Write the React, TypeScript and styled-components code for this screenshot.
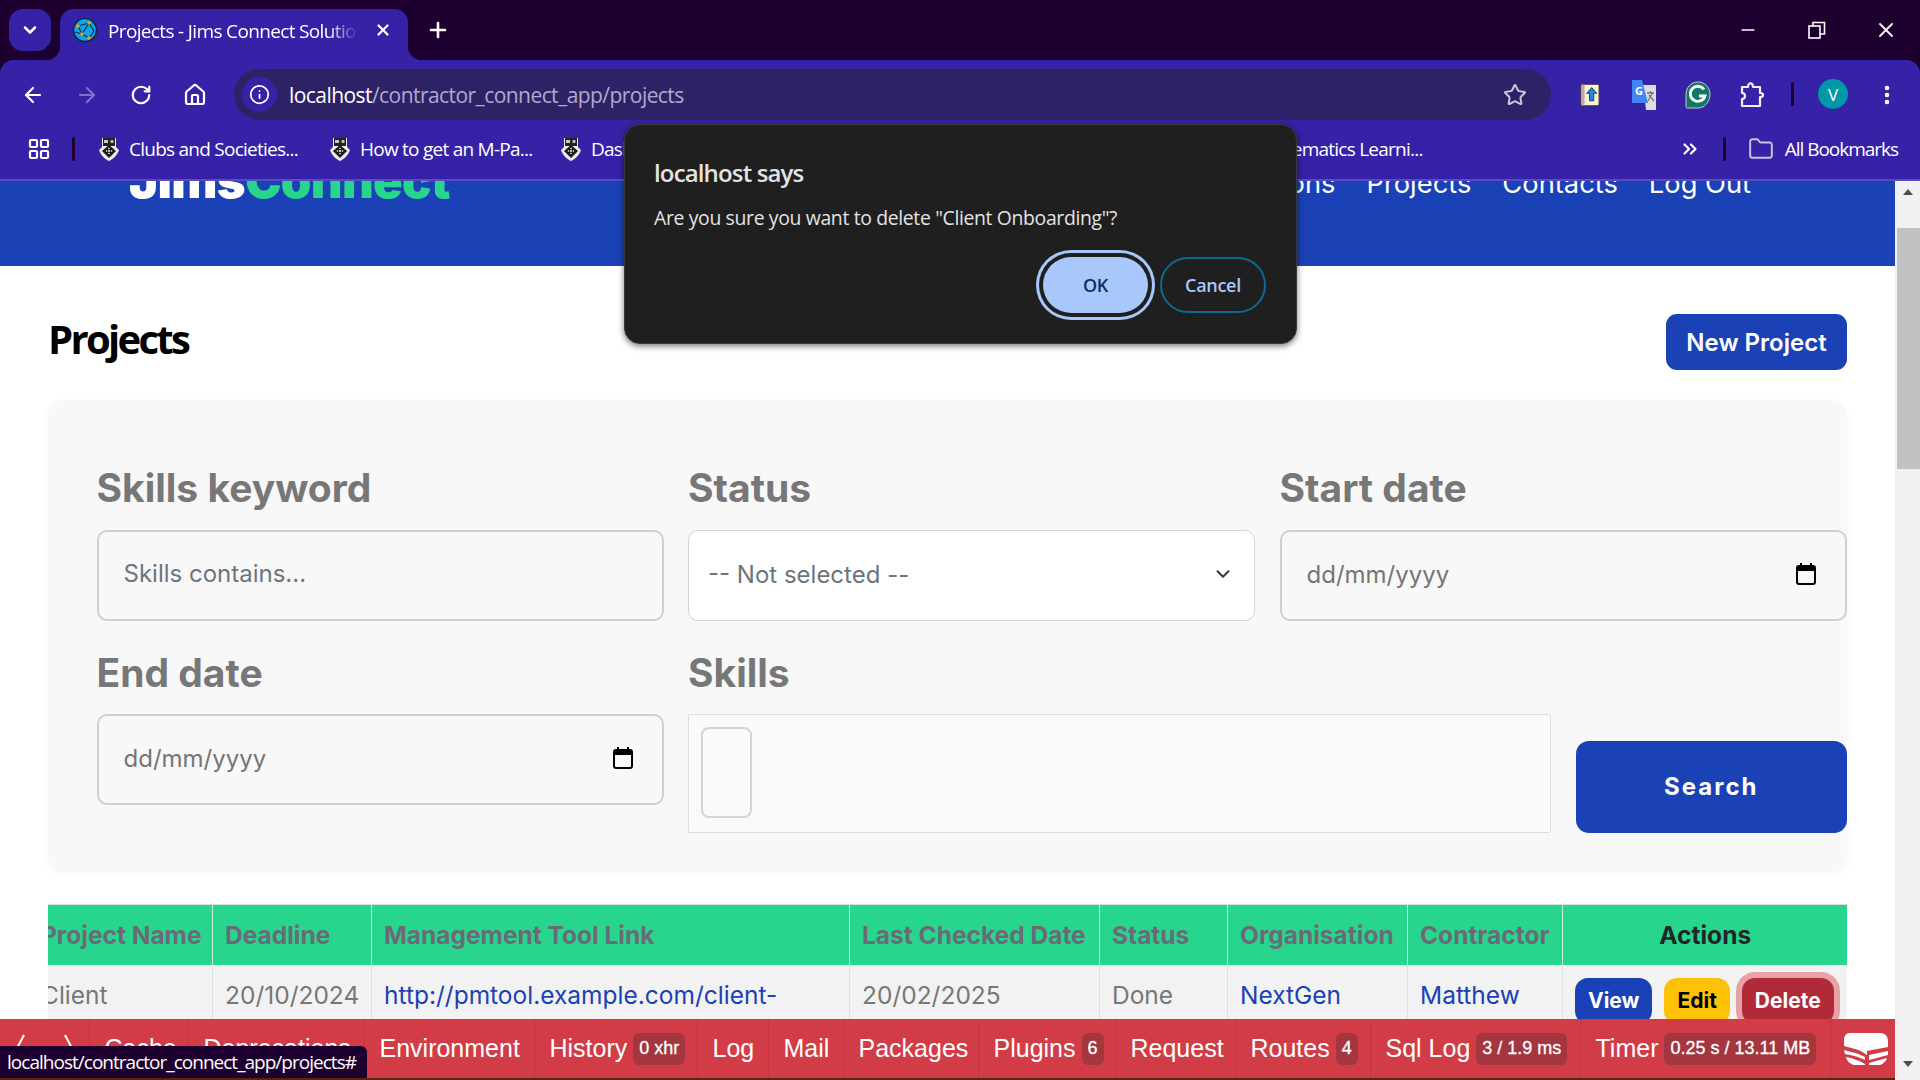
import styled, { createGlobalStyle } from "styled-components";
import { ArrowLeft, ArrowRight, ChevronDown, ChevronsRight, EllipsisVertical, Folder, Home, Info, LayoutGrid, Plus, RotateCw, Star, X, Minus } from "lucide-react";

const blue = "#1a41b5";
const chromeFont = `"Open Sans", "Noto Sans", sans-serif`;

const GlobalStyle = createGlobalStyle`
    html, body {
        margin: 0;
        height: 100%;
        overflow: hidden;
        background: #fff;
        font-family: Inter, "Liberation Sans", sans-serif;
    }
    * { box-sizing: border-box; }
`;

const Screen = styled.div`
    position: relative;
    width: 1920px;
    height: 1080px;
    overflow: hidden;
    display: flex;
    flex-direction: column;
    background: #1e0030;
`;

/* ---------- browser chrome ---------- */

const TabStrip = styled.div`
    height: 60px;
    flex: none;
    display: flex;
    align-items: flex-start;
    padding-top: 9px;
    padding-left: 9px;
    color: #fff;
`;

const TabSearch = styled.div`
    width: 42px;
    height: 42px;
    border-radius: 14px;
    background: #3622a6;
    display: flex;
    align-items: center;
    justify-content: center;
`;

const Tab = styled.div`
    position: relative;
    width: 348px;
    height: 51px;
    margin-left: 9px;
    padding: 0 16px 9px 12px;
    border-radius: 14px 14px 0 0;
    background: #3622a6;
    display: flex;
    align-items: center;

    &::before, &::after {
        content: '';
        position: absolute;
        bottom: 0;
        width: 14px;
        height: 14px;
    }
    &::before {
        left: -14px;
        background: radial-gradient(circle at 0 0, #1e0030 14px, #3622a6 14.5px);
    }
    &::after {
        right: -14px;
        background: radial-gradient(circle at 100% 0, #1e0030 14px, #3622a6 14.5px);
    }
`;

const TabTitle = styled.span`
    margin-left: 10px;
    margin-top: 2px;
    width: 250px;
    overflow: hidden;
    white-space: nowrap;
    font: 400 19px ${chromeFont};
    letter-spacing: -0.65px;
    -webkit-mask-image: linear-gradient(90deg, #000 88%, transparent 100%);
    mask-image: linear-gradient(90deg, #000 88%, transparent 100%);
`;

const TabClose = styled.span`
    margin-left: auto;
    display: flex;
`;

const NewTab = styled.span`
    margin-left: 18px;
    margin-top: 9px;
    display: flex;
`;

const WindowButtons = styled.div`
    margin-left: auto;
    display: flex;
    align-items: center;
    height: 42px;
`;

const WindowButton = styled.span`
    width: 69px;
    display: flex;
    justify-content: center;
`;

const ChromeBody = styled.div`
    flex: none;
    background: #3622a6;
    border-radius: 14px 14px 0 0;
    color: #fff;
`;

const Toolbar = styled.div`
    height: 69px;
    padding: 9px 0 0 6px;
    display: flex;
    align-items: flex-start;
`;

const ToolButton = styled.span<{ $dim?: boolean }>`
    width: 54px;
    height: 51px;
    flex: none;
    display: flex;
    align-items: center;
    justify-content: center;
    color: ${p => (p.$dim ? "#7e72cc" : "#fff")};
`;

const Omnibox = styled.div`
    width: 1317px;
    height: 51px;
    margin: 0 12px;
    padding-left: 8px;
    border-radius: 26px;
    background: #2e2266;
    display: flex;
    align-items: center;
`;

const SiteInfo = styled.span`
    width: 35px;
    height: 35px;
    border-radius: 50%;
    background: #3622a6;
    display: flex;
    align-items: center;
    justify-content: center;
`;

const Url = styled.span`
    margin-left: 12px;
    font: 400 21px ${chromeFont};
    letter-spacing: -0.56px;
    color: #b0a9cf;
    b { font-weight: 400; color: #fff; }
`;

const OmniStar = styled.span`
    margin-left: auto;
    margin-right: 24px;
    display: flex;
    color: #c9c5dc;
`;

const ToolDivider = styled.span`
    width: 3px;
    height: 24px;
    margin: 13px 0 0 12px;
    background: #1e0030;
    border-radius: 2px;
`;

const Avatar = styled.span`
    width: 30px;
    height: 30px;
    margin: 10px 12px 0 24px;
    border-radius: 50%;
    background: #0097a7;
    display: flex;
    align-items: center;
    justify-content: center;
    font: 400 17px ${chromeFont};
`;

const BookmarksBar = styled.div`
    height: 52px;
    padding: 0 22px 10px 27px;
    border-bottom: 2px solid #5a49c4;
    display: flex;
    align-items: center;
    font: 400 19px ${chromeFont};
    letter-spacing: -0.75px;
    white-space: nowrap;
`;

const BarDivider = styled.span<{ $left: number; $right: number }>`
    width: 3px;
    height: 24px;
    margin: 0 ${p => p.$right}px 0 ${p => p.$left}px;
    background: #1e0030;
    border-radius: 2px;
`;

const Bookmark = styled.span`
    width: 231px;
    display: flex;
    align-items: center;
    gap: 9px;
`;

const BookmarkTail = styled.span`
    margin-left: auto;
    margin-right: 256px;
`;

const BookmarkFolder = styled.span`
    display: flex;
    align-items: center;
    gap: 11px;
    letter-spacing: -1.03px;
    svg { color: #c9c5dc; }
`;

/* ---------- page ---------- */

const Viewport = styled.div`
    flex: 1;
    min-height: 0;
    display: flex;
    background: #fff;
`;

const PageColumn = styled.div`
    position: relative;
    flex: 1;
    min-width: 0;
    overflow: hidden;
`;

const Scrollbar = styled.div`
    width: 25px;
    flex: none;
    padding-top: 8px;
    background: #f1f1f1;
    display: flex;
    flex-direction: column;
    align-items: flex-end;
`;

const ScrollArrow = styled.span<{ $down?: boolean }>`
    width: 0;
    height: 0;
    margin-right: 7px;
    border-left: 5px solid transparent;
    border-right: 5px solid transparent;
    ${p => (p.$down ? "border-top: 6px solid #505050; margin-top: 592px;" : "border-bottom: 6px solid #505050;")}
`;

const ScrollThumb = styled.div`
    width: 23px;
    height: 241px;
    margin-top: 33px;
    background: #c1c1c1;
`;

const SiteHeader = styled.header`
    height: 85px;
    padding: 0 144px 0 129px;
    background: ${blue};
    overflow: hidden;
    display: flex;
    justify-content: space-between;
    align-items: flex-start;
`;

const Logo = styled.div`
    margin-top: -33px;
    font-size: 49px;
    line-height: 66px;
    font-weight: 900;
    letter-spacing: -0.7px;
    color: #fff;
    span { color: #28d58d; }
`;

const SiteNav = styled.nav`
    margin-top: -17px;
    display: flex;
    gap: 31px;
    font-size: 27.3px;
    line-height: 40px;
    color: #fff;
`;

const Main = styled.main`
    padding: 48px 48px 0 48px;
`;

const TitleRow = styled.div`
    display: flex;
    justify-content: space-between;
    align-items: flex-start;
`;

const PageTitle = styled.h1`
    margin: -3px 0 0 0;
    font: 700 40px/56px "Open Sans", sans-serif;
    letter-spacing: -2.7px;
    color: #000;
`;

const PrimaryButton = styled.button`
    height: 56px;
    width: 181px;
    border: 0;
    border-radius: 11px;
    background: ${blue};
    color: #fff;
    font: 600 24px Inter, sans-serif;
`;

const FilterPanel = styled.section`
    height: 468px;
    margin-top: 30px;
    padding: 66px 0 0 48.5px;
    border-radius: 16px;
    background: #f8f8f8;
    box-shadow: 0 4px 10px rgba(0, 0, 0, 0.05);
`;

const TopFilters = styled.div`
    display: grid;
    grid-template-columns: repeat(3, 567px);
    column-gap: 24.5px;
`;

const FilterLabel = styled.div`
    height: 44px;
    margin-bottom: 20px;
    font-size: 39px;
    line-height: 44px;
    font-weight: 700;
    color: #777;
    white-space: nowrap;
`;

const BottomFilters = styled.div`
    margin-top: 30px;
    display: grid;
    grid-template-columns: 567px 863px 271.5px;
    column-gap: 24.5px;

    ${FilterLabel} { margin-bottom: 19px; }
`;

const Filter = styled.div``;

const FieldBox = styled.div<{ $select?: boolean }>`
    height: 91px;
    display: flex;
    align-items: center;
    justify-content: space-between;
    border-radius: 10px;
    border: ${p => (p.$select ? "1px solid #ced4da" : "2px solid #cfcfcf")};
    background: ${p => (p.$select ? "#fff" : "transparent")};
    padding: 0 ${p => (p.$select ? "20px" : "29px")} 3px ${p => (p.$select ? "19px" : "25px")};
    font-size: 24px;
    color: ${p => (p.$select ? "#6c757d" : "#757575")};
`;

const SkillsInput = styled.input`
    width: 100%;
    height: 91px;
    padding: 0 25px 4px;
    border-radius: 10px;
    border: 2px solid #cfcfcf;
    background: transparent;
    font: 400 24px Inter, sans-serif;
    &::placeholder { color: #6c757d; opacity: 1; }
`;

const SkillsBox = styled.div`
    height: 119px;
    padding: 12px;
    border: 1px solid #ddd;
    border-radius: 2px;
    background: #fafafa;
`;

const SkillChip = styled.div`
    width: 51px;
    height: 91px;
    border: 2px solid #d4d4d4;
    border-radius: 8px;
`;

const SearchButton = styled.button`
    align-self: end;
    height: 92px;
    padding-bottom: 3px;
    border: 0;
    border-radius: 13px;
    background: ${blue};
    color: #fff;
    font: 700 24px Inter, sans-serif;
    letter-spacing: 2px;
`;

const TableClip = styled.div`
    margin-top: 36px;
    overflow: hidden;
`;

const DataTable = styled.table`
    width: 1819px;
    margin-left: -20px;
    table-layout: fixed;
    border-collapse: collapse;
    border-top: 1px solid #dedede;
    font-size: 24.5px;
`;

const HeadCell = styled.th<{ $dark?: boolean; $center?: boolean }>`
    height: 60px;
    padding: 0 12px;
    background: #28d58d;
    border-left: 1px solid #c9efe0;
    text-align: ${p => (p.$center ? "center" : "left")};
    font-weight: 700;
    white-space: nowrap;
    color: ${p => (p.$dark ? "#212529" : "#6a6a78")};
`;

const BodyCell = styled.td`
    padding: 10px 12px;
    background: #f2f2f2;
    border-left: 1px solid #dfdfdf;
    vertical-align: top;
    color: #777;
    line-height: 40px;

    a { color: ${blue}; text-decoration: none; }
`;

const RowActions = styled.div`
    display: flex;
    gap: 12px;
    margin-top: 3px;
`;

const ActionButton = styled.button<{ $bg: string; $fg: string; $ring?: boolean }>`
    height: 46px;
    padding: 0 13px;
    border: 0;
    border-radius: 13px;
    background: ${p => p.$bg};
    color: ${p => p.$fg};
    font: 700 21px Inter, sans-serif;
    box-shadow: ${p => (p.$ring ? "0 0 0 6px #e9a1a8" : "none")};
`;

/* ---------- debug bar ---------- */

const DebugBar = styled.div`
    position: absolute;
    left: 0;
    right: 0;
    bottom: 0;
    height: 61px;
    background: #d23c46;
    border-bottom: 2px solid #5a2410;
    display: flex;
    font: 400 25px "Liberation Sans", sans-serif;
    color: #fff;
    white-space: nowrap;
`;

const DebugItem = styled.div<{ $w: number }>`
    width: ${p => p.$w}px;
    flex: none;
    padding-left: 14.5px;
    border-right: 1px solid #c2343e;
    display: flex;
    align-items: center;
    gap: 6px;
`;

const DebugBadge = styled.span`
    height: 32px;
    padding: 0 6px;
    border-radius: 6px;
    background: #a3363f;
    display: flex;
    align-items: center;
    font-size: 18px;
    -webkit-text-stroke: 0.3px #fff;
`;

const DebugLogo = styled.div`
    flex: 1;
    padding-left: 6px;
    display: flex;
    align-items: center;
    justify-content: center;
`;

const StatusBubble = styled.div`
    position: absolute;
    left: 0;
    bottom: 2px;
    width: 367px;
    height: 32px;
    padding-left: 7px;
    border-radius: 0 6px 0 0;
    background: #1e0030;
    color: #fff;
    display: flex;
    align-items: center;
    font: 400 19px ${chromeFont};
    letter-spacing: -0.98px;
    white-space: nowrap;
`;

/* ---------- alert dialog ---------- */

const Dialog = styled.div`
    position: absolute;
    top: 124px;
    left: 624px;
    width: 673px;
    height: 220px;
    padding: 33px 30px 0 29px;
    border-radius: 16px;
    background: #1f1f1f;
    border: 1px solid #3a3a3a;
    box-shadow: 0 2px 6px rgba(0, 0, 0, 0.55);
    color: #e3e3e3;
    font-family: ${chromeFont};
`;

const DialogTitle = styled.div`
    font-size: 24px;
    line-height: 30px;
    font-weight: 600;
    letter-spacing: -0.85px;
`;

const DialogText = styled.div`
    margin-top: 15px;
    font-size: 19.4px;
    line-height: 30px;
    letter-spacing: -0.35px;
`;

const DialogActions = styled.div`
    margin-top: 24px;
    display: flex;
    justify-content: flex-end;
    gap: 12px;
`;

const DialogButton = styled.button<{ $primary?: boolean }>`
    width: ${p => (p.$primary ? 105 : 106)}px;
    height: 56px;
    border-radius: 28px;
    font: 600 18px ${chromeFont};
    letter-spacing: -0.3px;
    background: ${p => (p.$primary ? "#a8c7fa" : "transparent")};
    color: ${p => (p.$primary ? "#062e6f" : "#a8c7fa")};
    border: ${p => (p.$primary ? "0" : "2px solid #0b6a94")};
    box-shadow: ${p => (p.$primary ? "0 0 0 4px #1f1f1f, 0 0 0 7px #a8c7fa" : "none")};
`;

/* ---------- small drawings ---------- */

const Globe = () => (
    <svg width="26" height="26" viewBox="0 0 26 26">
        <circle cx="13" cy="13" r="11.5" fill="#0ea5e9" stroke="#0b2a45" strokeWidth="1.5" />
        <path d="M6 9 L17 6 M6 9 L10 17 M10 17 L17 21 M17 6 L10 17 M17 6 L22 14 M3 15 L10 17 M17 21 L22 14" stroke="#0b2a45" strokeWidth="1.2" fill="none" />
        <circle cx="6" cy="9" r="1.8" fill="#f59e0b" />
        <circle cx="17" cy="6" r="1.8" fill="#f59e0b" />
        <circle cx="10" cy="17" r="1.8" fill="#f59e0b" />
        <circle cx="17" cy="21" r="1.8" fill="#f59e0b" />
    </svg>
);

const Crest = () => (
    <svg width="22" height="24" viewBox="0 0 22 24">
        <path d="M4 1 H18 V10 L21 13 C19 19 15 22 11 24 C7 22 3 19 1 13 L4 10 Z" fill="#ededed" />
        <rect x="5" y="1" width="12" height="8" fill="#222" />
        <rect x="6" y="3" width="4" height="3" fill="#ccc" />
        <circle cx="14" cy="4.5" r="1.7" fill="#bbb" />
        <path d="M11 8 L18 14 L11 21 L4 14 Z" fill="#1a1a1a" />
        <circle cx="11" cy="14" r="1" fill="#fff" />
        <circle cx="8.5" cy="14" r="0.8" fill="#fff" />
        <circle cx="13.5" cy="14" r="0.8" fill="#fff" />
        <circle cx="11" cy="11.5" r="0.8" fill="#fff" />
        <circle cx="11" cy="16.5" r="0.8" fill="#fff" />
    </svg>
);

const BookExtension = () => (
    <svg width="20" height="24" viewBox="0 0 24 28">
        <rect x="1" y="1" width="22" height="26" rx="1.5" fill="#fbf3d5" stroke="#3a3142" strokeWidth="1.4" />
        <rect x="1.5" y="1.5" width="4" height="25" fill="#c9a3a8" />
        <path d="M14 5 L20 12 H16.5 V21 H11.5 V12 H8 Z" fill="#1e88e5" stroke="#10294d" strokeWidth="1" />
    </svg>
);

const TranslateExtension = () => (
    <svg width="26" height="30" viewBox="0 0 26 30">
        <path d="M12 5 H25 V30 H15 Z" fill="#dcdcdc" />
        <path d="M16 13 H23 M19.5 11 V13 M17 21 L21.5 13 M18 15 L23 21" stroke="#777" strokeWidth="1.3" fill="none" />
        <path d="M1 0 H11 L17 23 H1 Z" fill="#4285f4" />
        <text x="4" y="15" fontSize="11" fontWeight="700" fill="#fff" fontFamily="Open Sans, sans-serif">G</text>
    </svg>
);

const GrammarlyExtension = () => (
    <svg width="26" height="28" viewBox="0 0 26 28">
        <path d="M13 1 C20 1 25 6.5 25 13.5 C25 20.5 20 27 13 27 H2 C1 27 1 26 1 25 V13.5 C1 6.5 6 1 13 1 Z" fill="#0f7a5f" stroke="#c9c5dc" strokeWidth="1" />
        <path d="M19 8.5 A7.5 7.5 0 1 0 20 15 H14" stroke="#fff" strokeWidth="2.8" fill="none" />
    </svg>
);

const PuzzleIcon = () => (
    <svg width="24" height="28" viewBox="0 0 24 28" fill="none" stroke="#f2f0fb" strokeWidth="2.2" strokeLinejoin="round">
        <path d="M2 6 H8 C8 1 13 1 13 6 H20 V12 C24 12 24 16 20 16 V25 H2 V18 C6 18 6 12 2 12 Z" />
    </svg>
);

const RestoreIcon = () => (
    <svg width="18" height="18" viewBox="0 0 18 18" fill="none" stroke="#fff" strokeWidth="1.6">
        <rect x="1" y="5" width="11" height="12" />
        <path d="M5 5 V1.5 H16.5 V13 H12" />
    </svg>
);

const CalendarIcon = () => (
    <svg width="20" height="22" viewBox="0 0 20 22">
        <rect x="1" y="3" width="18" height="18" rx="2" fill="none" stroke="#000" strokeWidth="2" />
        <rect x="1" y="3" width="18" height="5" fill="#000" />
        <rect x="4" y="0" width="2" height="4" fill="#000" />
        <rect x="14" y="0" width="2" height="4" fill="#000" />
    </svg>
);

const CodeIcon = () => (
    <svg width="60" height="30" viewBox="0 0 60 30" fill="none" stroke="#fff" strokeWidth="2">
        <path d="M9 1 L1 16 L9 30" />
        <path d="M50 1 L58 16 L50 30" />
    </svg>
);

const CakeIcon = () => (
    <svg width="46" height="32" viewBox="0 0 46 32">
        <path d="M7 0 H37 C43 0 45 4 45 9 V14 L24 18 V22 C16 16 8 15 1 13 V7 C1 3 3 0 7 0 Z" fill="#fff" />
        <path d="M1 17 C8 19 15 20 22 24 V27 C14 23 7 22 2 21 Z" fill="#fff" />
        <path d="M26 22 L45 18 V22 L26 27 Z" fill="#fff" />
        <path d="M3 24 C9 25 15 27 22 31 V32 H11 C7 31 4 28 3 24 Z" fill="#fff" />
        <path d="M26 30 L44 25 C43 28 40 31 37 32 H26 Z" fill="#fff" />
    </svg>
);

const columns = [184, 159, 478, 250, 128, 180, 155, 285];

const debugItems: { label?: string; badge?: string; w: number }[] = [
    { label: "Cache", w: 99 },
    { label: "Deprecations", w: 176 },
    { label: "Environment", w: 170 },
    { label: "History", badge: "0 xhr", w: 163 },
    { label: "Log", w: 71 },
    { label: "Mail", w: 75 },
    { label: "Packages", w: 135 },
    { label: "Plugins", badge: "6", w: 137 },
    { label: "Request", w: 120 },
    { label: "Routes", badge: "4", w: 135 },
    { label: "Sql Log", badge: "3 / 1.9 ms", w: 210 },
    { label: "Timer", badge: "0.25 s / 13.11 MB", w: 250 },
];

export default function App() {
    return (
        <Screen>
            <GlobalStyle />

            <TabStrip>
                <TabSearch><ChevronDown size={20} strokeWidth={3} /></TabSearch>
                <Tab>
                    <Globe />
                    <TabTitle>Projects - Jims Connect Solutions</TabTitle>
                    <TabClose><X size={18} strokeWidth={3} /></TabClose>
                </Tab>
                <NewTab><Plus size={24} strokeWidth={2.6} /></NewTab>
                <WindowButtons>
                    <WindowButton><Minus size={20} strokeWidth={2} /></WindowButton>
                    <WindowButton><RestoreIcon /></WindowButton>
                    <WindowButton><X size={24} strokeWidth={1.8} /></WindowButton>
                </WindowButtons>
            </TabStrip>

            <ChromeBody>
                <Toolbar>
                    <ToolButton><ArrowLeft size={24} strokeWidth={2.2} /></ToolButton>
                    <ToolButton $dim><ArrowRight size={24} strokeWidth={2.2} /></ToolButton>
                    <ToolButton><RotateCw size={22} strokeWidth={2.4} /></ToolButton>
                    <ToolButton><Home size={24} strokeWidth={2.2} /></ToolButton>
                    <Omnibox>
                        <SiteInfo><Info size={21} strokeWidth={2} /></SiteInfo>
                        <Url><b>localhost</b>/contractor_connect_app/projects</Url>
                        <OmniStar><Star size={24} strokeWidth={2} /></OmniStar>
                    </Omnibox>
                    <ToolButton><BookExtension /></ToolButton>
                    <ToolButton><TranslateExtension /></ToolButton>
                    <ToolButton><GrammarlyExtension /></ToolButton>
                    <ToolButton><PuzzleIcon /></ToolButton>
                    <ToolDivider />
                    <Avatar>V</Avatar>
                    <ToolButton><EllipsisVertical size={24} strokeWidth={2.6} /></ToolButton>
                </Toolbar>
                <BookmarksBar>
                    <LayoutGrid size={24} strokeWidth={2.2} />
                    <BarDivider $left={21} $right={23} />
                    <Bookmark><Crest />Clubs and Societies...</Bookmark>
                    <Bookmark><Crest />How to get an M-Pa...</Bookmark>
                    <Bookmark><Crest />Dashboard</Bookmark>
                    <BookmarkTail>Mathematics Learni...</BookmarkTail>
                    <ChevronsRight size={22} strokeWidth={2.4} />
                    <BarDivider $left={22} $right={22} />
                    <BookmarkFolder><Folder size={26} strokeWidth={1.8} /><span>All Bookmarks</span></BookmarkFolder>
                </BookmarksBar>
            </ChromeBody>

            <Viewport>
                <PageColumn>
                    <SiteHeader>
                        <Logo>Jims<span>Connect</span></Logo>
                        <SiteNav>
                            <span>Organisations</span>
                            <span>Projects</span>
                            <span>Contacts</span>
                            <span>Log Out</span>
                        </SiteNav>
                    </SiteHeader>

                    <Main>
                        <TitleRow>
                            <PageTitle>Projects</PageTitle>
                            <PrimaryButton>New Project</PrimaryButton>
                        </TitleRow>

                        <FilterPanel>
                            <TopFilters>
                                <Filter>
                                    <FilterLabel>Skills keyword</FilterLabel>
                                    <SkillsInput placeholder="Skills contains..." />
                                </Filter>
                                <Filter>
                                    <FilterLabel>Status</FilterLabel>
                                    <FieldBox $select>-- Not selected --<ChevronDown size={22} strokeWidth={2.2} color="#343a40" /></FieldBox>
                                </Filter>
                                <Filter>
                                    <FilterLabel>Start date</FilterLabel>
                                    <FieldBox>dd/mm/yyyy<CalendarIcon /></FieldBox>
                                </Filter>
                            </TopFilters>
                            <BottomFilters>
                                <Filter>
                                    <FilterLabel>End date</FilterLabel>
                                    <FieldBox>dd/mm/yyyy<CalendarIcon /></FieldBox>
                                </Filter>
                                <Filter>
                                    <FilterLabel>Skills</FilterLabel>
                                    <SkillsBox><SkillChip /></SkillsBox>
                                </Filter>
                                <SearchButton>Search</SearchButton>
                            </BottomFilters>
                        </FilterPanel>

                        <TableClip>
                            <DataTable>
                                <colgroup>
                                    {columns.map((width, index) => <col key={index} width={width} />)}
                                </colgroup>
                                <thead>
                                    <tr>
                                        <HeadCell>Project Name</HeadCell>
                                        <HeadCell>Deadline</HeadCell>
                                        <HeadCell>Management Tool Link</HeadCell>
                                        <HeadCell>Last Checked Date</HeadCell>
                                        <HeadCell>Status</HeadCell>
                                        <HeadCell>Organisation</HeadCell>
                                        <HeadCell>Contractor</HeadCell>
                                        <HeadCell $dark $center>Actions</HeadCell>
                                    </tr>
                                </thead>
                                <tbody>
                                    <tr>
                                        <BodyCell>Client Onboarding</BodyCell>
                                        <BodyCell>20/10/2024</BodyCell>
                                        <BodyCell><a href="#">http://pmtool.example.com/client-onboarding</a></BodyCell>
                                        <BodyCell>20/02/2025</BodyCell>
                                        <BodyCell>Done</BodyCell>
                                        <BodyCell><a href="#">NextGen</a></BodyCell>
                                        <BodyCell><a href="#">Matthew</a></BodyCell>
                                        <BodyCell>
                                            <RowActions>
                                                <ActionButton $bg={blue} $fg="#fff">View</ActionButton>
                                                <ActionButton $bg="#ffc107" $fg="#000">Edit</ActionButton>
                                                <ActionButton $bg="#b02a37" $fg="#fff" $ring>Delete</ActionButton>
                                            </RowActions>
                                        </BodyCell>
                                    </tr>
                                </tbody>
                            </DataTable>
                        </TableClip>
                    </Main>

                    <DebugBar>
                        <DebugItem $w={90}><CodeIcon /></DebugItem>
                        {debugItems.map(item => (
                            <DebugItem key={item.label} $w={item.w}>
                                {item.label}
                                {item.badge && <DebugBadge>{item.badge}</DebugBadge>}
                            </DebugItem>
                        ))}
                        <DebugLogo><CakeIcon /></DebugLogo>
                    </DebugBar>
                    <StatusBubble>localhost/contractor_connect_app/projects#</StatusBubble>
                </PageColumn>
                <Scrollbar>
                    <ScrollArrow />
                    <ScrollThumb />
                    <ScrollArrow $down />
                </Scrollbar>
            </Viewport>

            <Dialog>
                <DialogTitle>localhost says</DialogTitle>
                <DialogText>Are you sure you want to delete "Client Onboarding"?</DialogText>
                <DialogActions>
                    <DialogButton $primary>OK</DialogButton>
                    <DialogButton>Cancel</DialogButton>
                </DialogActions>
            </Dialog>
        </Screen>
    );
}
